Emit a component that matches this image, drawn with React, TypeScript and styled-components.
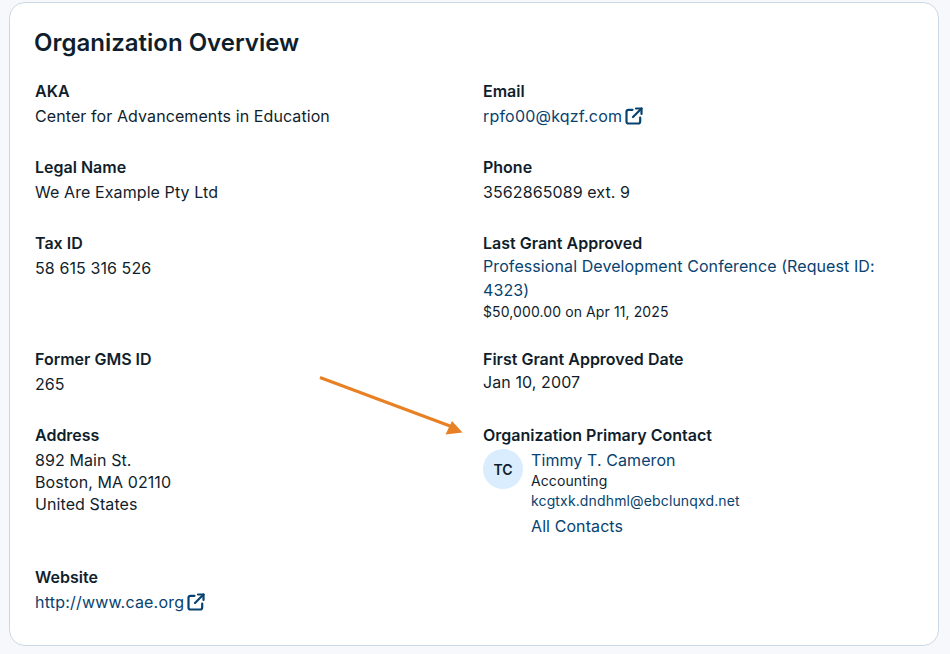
import styled, { createGlobalStyle } from 'styled-components';

const GlobalStyle = createGlobalStyle`
	html, body {
		margin: 0;
		background: #f6f8fb;
		font-family: Inter, 'Liberation Sans', sans-serif;
		color: #101e2c;
	}
`;

const Page = styled.div`
	position: relative;
	width: 950px;
	height: 654px;
	padding: 2px 11px 0 9px;
	box-sizing: border-box;
`;

const Card = styled.section`
	box-sizing: border-box;
	height: 644px;
	padding: 24px 25px 0;
	background: #fff;
	border: 1px solid #cbd8e6;
	border-radius: 16px;
`;

const Title = styled.h2`
	margin: 0 0 20px -1px;
	font-size: 24px;
	line-height: 32px;
	font-weight: 600;
`;

const Grid = styled.div`
	display: grid;
	grid-template-columns: 448px 400px;
	grid-auto-rows: min-content;
	row-gap: 25px;
`;

const Field = styled.div`
	display: flex;
	flex-direction: column;
	min-height: 51px;
`;

const Label = styled.div`
	font-size: 16px;
	line-height: 24px;
	font-weight: 600;
`;

const Value = styled.div`
	font-size: 16px;
	line-height: 22px;
	letter-spacing: 0.09px;
	&:nth-child(2) {
		margin-top: 2px;
	}
`;

const DateValue = styled(Value)`
	&:nth-child(2) {
		margin-top: 0;
	}
`;

const Anchor = styled.a`
	color: #08426f;
	font-size: 16px;
	line-height: 22px;
	letter-spacing: 0.09px;
	text-decoration: none;
`;

const LinkRow = styled.div`
	display: flex;
	align-items: center;
	gap: 3px;
	height: 22px;
	margin-top: 2px;
	${Anchor} {
		letter-spacing: 0.2px;
	}
`;

const GrantLink = styled(Anchor)`
	margin-top: -1px;
	line-height: 24px;
`;

const Small = styled.div`
	font-size: 14px;
	line-height: 20px;
	letter-spacing: 0.1px;
`;

const SmallLink = styled(Anchor)`
	font-size: 14px;
	line-height: 20px;
	letter-spacing: 0.14px;
`;

const Contact = styled.div`
	display: flex;
	gap: 8px;
	margin: 2px 0 3px;
`;

const Avatar = styled.div`
	width: 40px;
	height: 40px;
	flex: none;
	border-radius: 50%;
	background: #d9edfe;
	display: flex;
	align-items: center;
	justify-content: center;
	font-size: 14px;
	font-weight: 600;
`;

const ContactInfo = styled.div`
	display: flex;
	flex-direction: column;
`;

const ContactsLink = styled(Anchor)`
	margin-top: 4px;
`;

const Arrow = styled.svg`
	position: absolute;
	left: 0;
	top: 0;
	pointer-events: none;
`;

const Ext = styled.svg`
	width: 18px;
	height: 18px;
	flex: none;
`;

const ExternalIcon = () => (
	<Ext viewBox='0 0 18 18' fill='none' stroke='#08426f' strokeWidth='2.2' strokeLinecap='round' strokeLinejoin='round'>
		<path d='M7.5 2.8H3.5a2 2 0 0 0-2 2v9.7a2 2 0 0 0 2 2h9.7a2 2 0 0 0 2-2V10.5' />
		<path d='M11 1.5h5.5V7' />
		<path d='M16.5 1.5 8 10' />
	</Ext>
);

const App = () => (
	<Page>
		<GlobalStyle />
		<Card>
			<Title>Organization Overview</Title>
			<Grid>
				<Field>
					<Label>AKA</Label>
					<Value>Center for Advancements in Education</Value>
				</Field>
				<Field>
					<Label>Email</Label>
					<LinkRow>
						<Anchor href='#'>rpfo00@kqzf.com</Anchor>
						<ExternalIcon />
					</LinkRow>
				</Field>
				<Field>
					<Label>Legal Name</Label>
					<Value>We Are Example Pty Ltd</Value>
				</Field>
				<Field>
					<Label>Phone</Label>
					<Value>3562865089 ext. 9</Value>
				</Field>
				<Field>
					<Label>Tax ID</Label>
					<Value>58 615 316 526</Value>
				</Field>
				<Field>
					<Label>Last Grant Approved</Label>
					<GrantLink href='#'>Professional Development Conference (Request ID: 4323)</GrantLink>
					<Small>$50,000.00 on Apr 11, 2025</Small>
				</Field>
				<Field>
					<Label>Former GMS ID</Label>
					<Value>265</Value>
				</Field>
				<Field>
					<Label>First Grant Approved Date</Label>
					<DateValue>Jan 10, 2007</DateValue>
				</Field>
				<Field>
					<Label>Address</Label>
					<Value>892 Main St.</Value>
					<Value>Boston, MA 02110</Value>
					<Value>United States</Value>
				</Field>
				<Field>
					<Label>Organization Primary Contact</Label>
					<Contact>
						<Avatar>TC</Avatar>
						<ContactInfo>
							<Anchor href='#'>Timmy T. Cameron</Anchor>
							<Small>Accounting</Small>
							<SmallLink href='#'>kcgtxk.dndhml@ebclunqxd.net</SmallLink>
							<ContactsLink href='#'>All Contacts</ContactsLink>
						</ContactInfo>
					</Contact>
				</Field>
				<Field>
					<Label>Website</Label>
					<LinkRow>
						<Anchor href='#'>http://www.cae.org</Anchor>
						<ExternalIcon />
					</LinkRow>
				</Field>
			</Grid>
		</Card>
		<Arrow width='950' height='654' viewBox='0 0 950 654'>
			<path d='M320 377.5 L450 426' stroke='#e88024' strokeWidth='3' fill='none' />
			<path d='M462.5 432.5 L445.5 434.5 L452 421 Z' fill='#e88024' />
		</Arrow>
	</Page>
);

export default App;
